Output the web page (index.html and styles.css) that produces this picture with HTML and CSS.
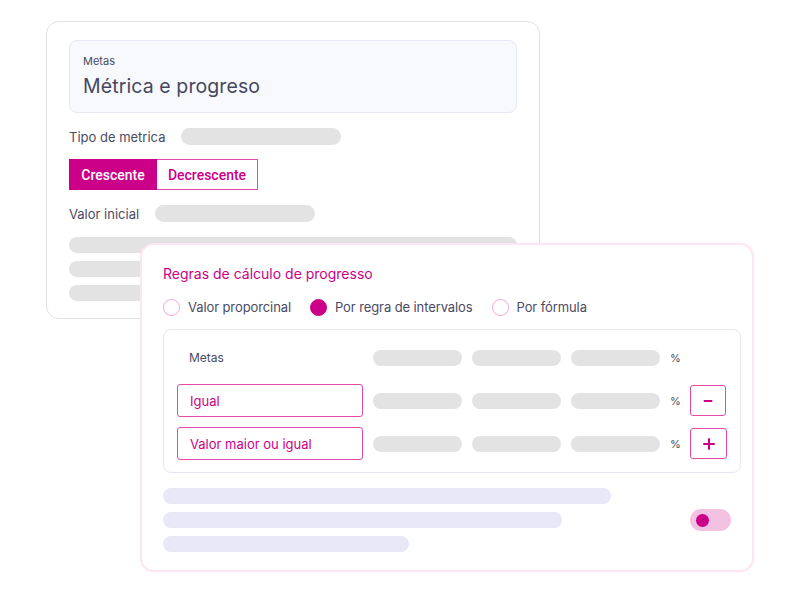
FILE: index.html
```html
<!DOCTYPE html>
<html lang="pt">
<head>
<meta charset="utf-8">
<title>Métrica e progresso</title>
<link rel="stylesheet" href="styles.css">
</head>
<body>
<div class="canvas">
  <section class="card card-back">
    <div class="header-box">
      <div class="eyebrow">Metas</div>
      <div class="title">Métrica e progreso</div>
    </div>
    <div class="field-row first">
      <span class="label">Tipo de metrica</span>
      <span class="pill pill-160"></span>
    </div>
    <div class="segmented">
      <div class="seg seg-active">Crescente</div>
      <div class="seg seg-outline">Decrescente</div>
    </div>
    <div class="field-row">
      <span class="label">Valor inicial</span>
      <span class="pill pill-160"></span>
    </div>
    <div class="bars">
      <span class="bar bar-full"></span>
      <span class="bar bar-mid"></span>
      <span class="bar bar-short"></span>
    </div>
  </section>

  <section class="card card-front">
    <h2 class="section-title">Regras de cálculo de progresso</h2>
    <div class="radios">
      <label class="radio"><span class="dot"></span>Valor proporcinal</label>
      <label class="radio"><span class="dot dot-on"></span>Por regra de intervalos</label>
      <label class="radio"><span class="dot"></span>Por fórmula</label>
    </div>
    <div class="table-box">
      <div class="trow">
        <div class="cell-label plain">Metas</div>
        <span class="pill pill-89"></span>
        <span class="pill pill-89"></span>
        <span class="pill pill-89"></span>
        <span class="pct">%</span>
        <span class="btn-slot"></span>
      </div>
      <div class="trow">
        <div class="cell-label input">Igual</div>
        <span class="pill pill-89"></span>
        <span class="pill pill-89"></span>
        <span class="pill pill-89"></span>
        <span class="pct">%</span>
        <div class="icon-btn" aria-label="remover">
          <svg width="10" height="10" viewBox="0 0 10 10"><path d="M1.5 5h7" stroke="#cc0088" stroke-width="2" stroke-linecap="round"/></svg>
        </div>
      </div>
      <div class="trow">
        <div class="cell-label input">Valor maior ou igual</div>
        <span class="pill pill-89"></span>
        <span class="pill pill-89"></span>
        <span class="pill pill-89"></span>
        <span class="pct">%</span>
        <div class="icon-btn wide" aria-label="adicionar">
          <svg width="12" height="12" viewBox="0 0 12 12"><path d="M6 1v10M1 6h10" stroke="#cc0088" stroke-width="2" stroke-linecap="round"/></svg>
        </div>
      </div>
    </div>
    <div class="footer">
      <div class="lbars">
        <span class="lbar lbar-1"></span>
        <span class="lbar lbar-2"></span>
        <span class="lbar lbar-3"></span>
      </div>
      <span class="toggle"><span class="knob"></span></span>
    </div>
  </section>
</div>
</body>
</html>
```

FILE: styles.css
```css
* { box-sizing: border-box; }
html, body { margin: 0; padding: 0; background: #ffffff; }
body {
  font-family: "Inter", "Noto Sans", "DejaVu Sans", sans-serif;
  color: #4a4b63;
}
.canvas {
  position: relative;
  width: 794px;
  height: 606px;
  overflow: hidden;
  background: #fff;
}
.card {
  position: absolute;
  background: #fff;
}
.card-back {
  left: 46px;
  top: 21px;
  width: 494px;
  height: 298px;
  border: 1px solid #e2e2e6;
  border-radius: 13px;
  padding: 18px 22px 0 22px;
}
.header-box {
  height: 73px;
  background: #f8f9fd;
  border: 1px solid #e6e8f5;
  border-radius: 8px;
  padding: 13px 13px 0;
}
.eyebrow {
  font-size: 11px;
  line-height: 14px;
  color: #4a4b63;
}
.title {
  margin-top: 5px;
  font-size: 19.5px;
  line-height: 26px;
  color: #45475f;
  letter-spacing: 0.1px;
}
.field-row {
  display: flex;
  align-items: center;
  gap: 16px;
  height: 17px;
  margin-top: 15px;
}
.label {
  font-size: 13px;
  color: #4a4b63;
}
.pill {
  display: block;
  height: 17px;
  border-radius: 9px;
  background: #e3e3e3;
  flex: none;
}
.pill-160 { width: 160px; }
.segmented {
  display: flex;
  margin-top: 14px;
  height: 31px;
}
.seg {
  display: flex;
  align-items: center;
  justify-content: center;
  font-family: "Roboto", "Liberation Sans", sans-serif;
  font-size: 14px;
  font-weight: 500;
  height: 31px;
}
.seg-active {
  width: 88px;
  background: #cc0088;
  color: #fff;
}
.seg-outline {
  width: 101px;
  background: #fff;
  color: #cc0088;
  border: 1px solid #e24aa8;
  border-left: none;
}
.bars {
  display: flex;
  flex-direction: column;
  gap: 8px;
  margin-top: 15px;
}
.bar {
  display: block;
  height: 16px;
  border-radius: 8px;
  background: #e3e3e3;
}
.bar-full { width: 448px; }
.bar-mid { width: 300px; }
.bar-short { width: 260px; }

.card-front {
  left: 140px;
  top: 243px;
  width: 614px;
  height: 329px;
  border: 2px solid #fde6f3;
  border-radius: 14px;
  padding: 18px 21px 0 21px;
  box-shadow: 0 0 2px rgba(240, 160, 210, 0.15);
}
.section-title {
  margin: 0;
  font-size: 14px;
  line-height: 22px;
  font-weight: 400;
  color: #cc0088;
}
.radios {
  display: flex;
  gap: 19px;
  margin-top: 14px;
  height: 16px;
}
.radio {
  display: flex;
  align-items: center;
  gap: 8px;
  font-size: 13px;
  letter-spacing: -0.1px;
  color: #4a4b63;
  white-space: nowrap;
}
.dot {
  width: 17px;
  height: 17px;
  border-radius: 50%;
  border: 1.5px solid #f2a6d6;
  flex: none;
}
.dot-on {
  background: #cc0088;
  border-color: #cc0088;
}
.table-box {
  margin-top: 14px;
  width: 578px;
  height: 144px;
  border: 1px solid #e6e7f6;
  border-radius: 8px;
  padding: 11px 0 0 13px;
  display: flex;
  flex-direction: column;
  gap: 10px;
}
.trow {
  display: flex;
  align-items: center;
  gap: 10px;
  height: 33px;
}
.cell-label {
  width: 186px;
  height: 33px;
  flex: none;
  display: flex;
  align-items: center;
  padding-left: 12px;
  font-size: 13px;
}
.cell-label.plain { font-size: 12px; color: #4a4b63; }
.cell-label.input {
  border: 1px solid #e64aa8;
  border-radius: 3px;
  color: #cc0088;
}
.pill-89 { width: 89px; height: 16px; border-radius: 8px; }
.pct {
  font-size: 11px;
  color: #4a4b63;
  width: 10px;
}
.btn-slot { width: 36px; }
.icon-btn {
  width: 36px;
  height: 31px;
  flex: none;
  display: flex;
  align-items: center;
  justify-content: center;
  border: 1px solid #e64aa8;
  border-radius: 3px;
  background: #fff;
}
.icon-btn.wide { width: 37px; }
.footer {
  display: flex;
  align-items: center;
  margin-top: 15px;
  width: 568px;
}
.lbars {
  display: flex;
  flex-direction: column;
  gap: 8px;
  flex: 1;
}
.lbar {
  display: block;
  height: 16px;
  border-radius: 8px;
  background: #e8e8f9;
}
.lbar-1 { width: 448px; }
.lbar-2 { width: 399px; }
.lbar-3 { width: 246px; }
.toggle {
  display: flex;
  align-items: center;
  width: 41px;
  height: 22px;
  border-radius: 11px;
  background: #f3c1e2;
  padding-left: 5px;
  flex: none;
}
.knob {
  width: 15px;
  height: 15px;
  border-radius: 50%;
  background: #cc0088;
  border: 1px solid #f7d6ec;
}
```
